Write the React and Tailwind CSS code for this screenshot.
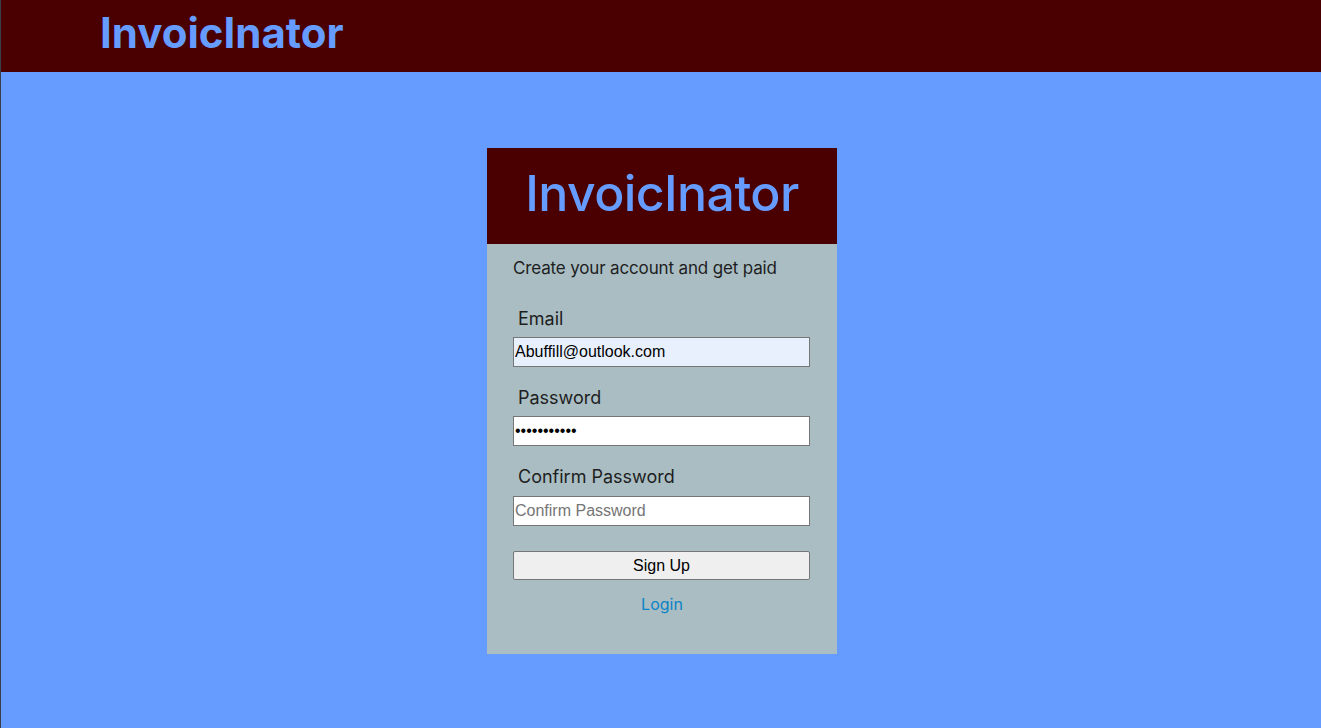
import { useState } from 'react';

const App = () => {
    const [email, setEmail] = useState('Abuffill@outlook.com');
    const [password, setPassword] = useState('passwordabc');
    const [confirm, setConfirm] = useState('');

    return (
        <div className="min-h-screen bg-[#669cff] border-l border-[#3a3f4a] font-['Inter','Liberation_Sans',sans-serif]">
            <header className="h-[72px] bg-[#4a0000] flex items-center pl-[99px] pb-[7px]">
                <h1 className="text-[42px] font-bold text-[#669cff] leading-none">InvoicInator</h1>
            </header>
            <main className="flex justify-center pt-[76px] pl-[2px]">
                <div className="w-[350px] h-[506px] bg-[#a9bdc3]">
                    <div className="h-[96px] bg-[#4a0000] flex items-center justify-center pb-[6px]">
                        <h2 className="text-[50px] font-medium text-[#669cff] leading-none tracking-[-0.6px]">InvoicInator</h2>
                    </div>
                    <form className="px-[26px] pt-[14px]" onSubmit={(e) => e.preventDefault()}>
                        <p className="text-[17px] text-[#1e1e1e] leading-[20px] tracking-[-0.15px]">Create your account and get paid</p>
                        <label className="block pl-[5px] mt-[30px] text-[18px] text-[#1e1e1e] leading-[22px]">Email</label>
                        <input
                            type="email"
                            value={email}
                            onChange={(e) => setEmail(e.target.value)}
                            className="block mt-[7px] w-[297px] h-[30px] px-[1px] bg-[#e8f0fe] border border-[#767676] text-[16px] text-black font-['Liberation_Sans',sans-serif] outline-none"
                        />
                        <label className="block pl-[5px] mt-[20px] text-[18px] text-[#1e1e1e] leading-[22px]">Password</label>
                        <input
                            type="password"
                            value={password}
                            onChange={(e) => setPassword(e.target.value)}
                            className="block mt-[7px] w-[297px] h-[30px] px-[1px] bg-white border border-[#767676] text-[16px] text-black font-['Liberation_Sans',sans-serif] outline-none"
                        />
                        <label className="block pl-[5px] mt-[20px] text-[18px] text-[#1e1e1e] leading-[22px]">Confirm Password</label>
                        <input
                            type="password"
                            value={confirm}
                            placeholder="Confirm Password"
                            onChange={(e) => setConfirm(e.target.value)}
                            className="block mt-[8px] w-[297px] h-[30px] px-[1px] bg-white border border-[#767676] text-[16px] text-black placeholder:text-[#757575] font-['Liberation_Sans',sans-serif] outline-none"
                        />
                        <button
                            type="submit"
                            className="block mt-[25px] w-[297px] h-[29px] bg-[#efefef] border border-[#767676] rounded-[2px] text-[16px] text-black font-['Liberation_Sans',sans-serif]"
                        >
                            Sign Up
                        </button>
                        <div className="mt-[12px] text-center">
                            <a href="#" className="text-[16px] text-[#0b84c6]">Login</a>
                        </div>
                    </form>
                </div>
            </main>
        </div>
    );
};

export default App;
